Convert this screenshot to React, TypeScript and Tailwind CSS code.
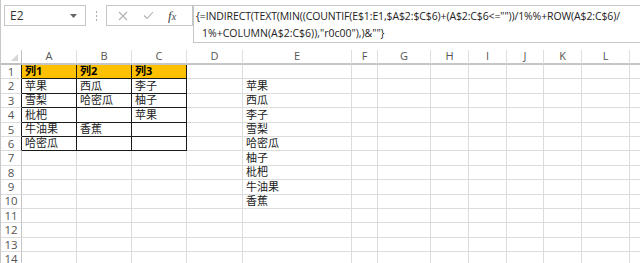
import React from "react"

const cols = ["A", "B", "C", "D", "E", "F", "G", "H", "I", "J", "K", "L", ""]

const data: Record<number, string[]> = {
  1: ["列1", "列2", "列3"],
  2: ["苹果", "西瓜", "李子", "", "苹果"],
  3: ["雪梨", "哈密瓜", "柚子", "", "西瓜"],
  4: ["枇杷", "", "苹果", "", "李子"],
  5: ["牛油果", "香蕉", "", "", "雪梨"],
  6: ["哈密瓜", "", "", "", "哈密瓜"],
  7: ["", "", "", "", "柚子"],
  8: ["", "", "", "", "枇杷"],
  9: ["", "", "", "", "牛油果"],
  10: ["", "", "", "", "香蕉"],
}

const rows = Array.from({ length: 14 }, (_, i) => i + 1)

const Cell = ({ r, c }: { r: number; c: number }) => {
  const text = data[r]?.[c] ?? ""
  const inTable = r <= 6 && c <= 2
  const header = r === 1 && c <= 2
  return (
    <div
      className={
        "flex items-end overflow-visible whitespace-nowrap pl-[3px] pb-[1px] text-[11px] leading-[13px] text-[#222] " +
        (inTable ? "border-r border-b border-[#1a1a1a] " : "border-r border-b border-[#dcdcdc] ") +
        (header ? "bg-[#ffc000] font-bold text-black" : "")
      }
    >
      {text}
    </div>
  )
}

export default function App() {
  return (
    <div className="w-[640px] h-[263px] overflow-hidden bg-white border-l border-[#c8c8c8] font-['Open_Sans','Noto_Sans_CJK_SC',sans-serif]">
      <div className="flex h-[50px] items-start pt-[5px]">
        <div className="ml-[3px] flex h-[21px] w-[82px] shrink-0 items-center justify-between border border-[#c6c6c6] pl-[5px] pr-[8px]">
          <span className="text-[12px] text-[#333]">E2</span>
          <svg width="7" height="4" viewBox="0 0 7 4">
            <path d="M0 0h7L3.5 4z" fill="#666" />
          </svg>
        </div>
        <div className="flex h-[21px] w-[20px] shrink-0 flex-col items-center justify-center gap-[2px]">
          <span className="h-[2px] w-[1px] bg-[#aaa]" />
          <span className="h-[2px] w-[1px] bg-[#aaa]" />
          <span className="h-[2px] w-[1px] bg-[#aaa]" />
        </div>
        <div className="flex h-[21px] w-[87px] shrink-0 items-center border border-[#c6c6c6] bg-white">
          <svg className="ml-[11px]" width="10" height="10" viewBox="0 0 10 10">
            <path d="M1 1l8 8M9 1l-8 8" stroke="#b0b0b0" strokeWidth="1.1" />
          </svg>
          <svg className="ml-[15px]" width="11" height="9" viewBox="0 0 11 9">
            <path d="M1 4.5l3 3L10 1" stroke="#b0b0b0" strokeWidth="1.1" fill="none" />
          </svg>
          <span className="ml-[14px] font-['Liberation_Serif',serif] text-[13px] italic text-[#444]">
            f<span className="text-[10px]">x</span>
          </span>
        </div>
        <div className="h-[38px] min-w-0 flex-1 overflow-hidden border border-r-0 border-[#c6c6c6] pl-[2px] pt-[2px] text-[10.5px] leading-[17px] text-[#222] whitespace-nowrap">
          <div className="tracking-[-0.12px]">{'{=INDIRECT(TEXT(MIN((COUNTIF(E$1:E1,$A$2:$C$6)+(A$2:C$6<=""))/1%%+ROW(A$2:C$6)/'}</div>
          <div className="pl-[6px]">{'1%+COLUMN(A$2:C$6)),"r0c00"),)&""}'}</div>
        </div>
      </div>

      <div className="grid grid-cols-[21px_55px_55px_55px_56px_109px_26px_53px_38px_38px_37px_38px_48px_20px] grid-rows-[15px_repeat(14,14.4px)]">
        <div className="flex items-end justify-end border-r border-b-2 border-[#c0c0c0] pr-[3px] pb-[2px]">
          <svg width="7" height="7" viewBox="0 0 7 7">
            <path d="M7 0v7H0z" fill="#d6d6d6" />
          </svg>
        </div>
        {cols.map((c, i) => (
          <div
            key={"h" + i}
            className="flex items-center justify-center border-b-2 border-b-[#c6c6c6] border-r border-r-[#dedede] text-[11px] text-[#555]"
          >
            {c}
          </div>
        ))}
        {rows.map((r) => (
          <React.Fragment key={r}>
            <div
              className={
                "flex items-center justify-center overflow-hidden border-b border-b-[#dcdcdc] text-[11.5px] leading-none text-[#555] " +
                (r <= 6 ? "border-r border-r-[#1a1a1a]" : "border-r border-r-[#c6c6c6]")
              }
            >
              {r}
            </div>
            {cols.map((_, c) => (
              <Cell key={c} r={r} c={c} />
            ))}
          </React.Fragment>
        ))}
      </div>
    </div>
  )
}
